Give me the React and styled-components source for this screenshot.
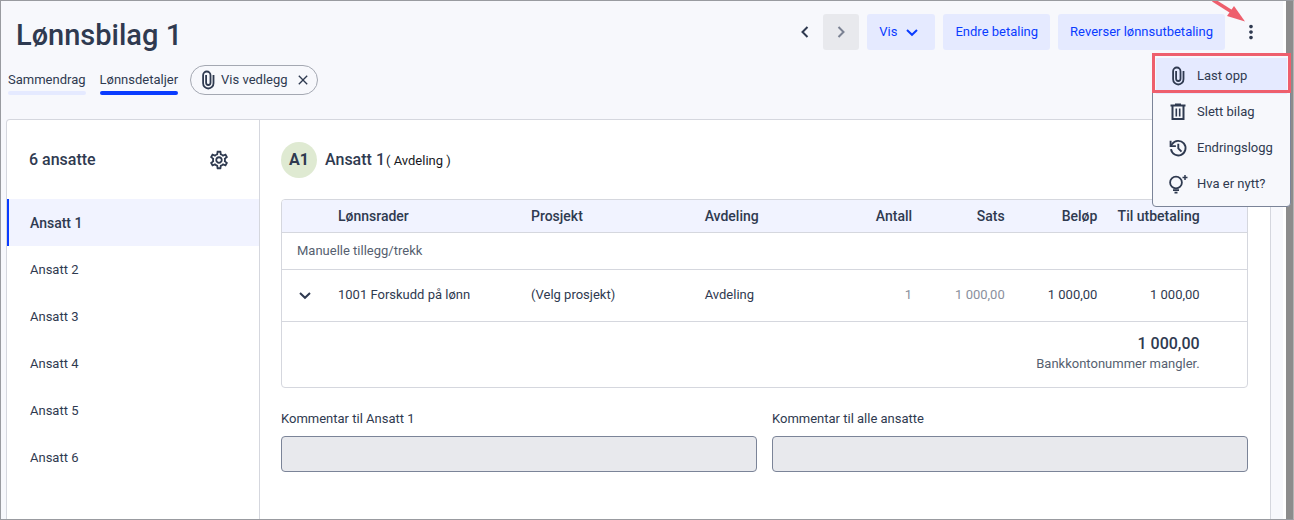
import React, { useState } from "react";
import styled, { createGlobalStyle, css } from "styled-components";
import { MdClose, MdMoreVert, MdOutlineSettings } from "react-icons/md";

const GlobalStyle = createGlobalStyle`
  *, *::before, *::after {
    box-sizing: border-box;
  }

  body {
    margin: 0;
    color: #2f3a50;
    background: #8c8c8c;
    font-family: Roboto, "Liberation Sans", sans-serif;
    font-size: 13px;
    line-height: 20px;
  }

  button, input {
    font: inherit;
    color: inherit;
  }

  button {
    border: 0;
    padding: 0;
    background: none;
    cursor: pointer;
  }

  svg {
    flex-shrink: 0;
  }
`;

const Window = styled.div`
  min-height: 100vh;
  display: flex;
  flex-direction: column;
  border: 1px solid #999ba0;
  border-right-color: #b4b4b4;
  background: #8c8c8c;
  padding-right: 7px;
`;

const Page = styled.div`
  flex: 1;
  display: flex;
  flex-direction: column;
  background: #f7f8fc;
  border-right: 3px solid #fff;
`;

const Header = styled.header`
  display: flex;
  justify-content: space-between;
  align-items: flex-start;
  padding: 13px 14px 0 15px;
`;

const Title = styled.h1`
  margin: 0;
  font-size: 29px;
  line-height: 42px;
  font-weight: 500;
`;

const Actions = styled.div`
  display: flex;
  gap: 8px;
`;

const IconButton = styled.button`
  width: ${({ $narrow }) => ($narrow ? "20px" : "36px")};
  height: 36px;
  display: flex;
  align-items: center;
  justify-content: center;
  border-radius: 3px;
  font-size: 22px;

  &:disabled {
    background: #e8e9ed;
    color: #7b8293;
    cursor: default;
  }
`;

const ActionButton = styled.button`
  height: 36px;
  display: flex;
  align-items: center;
  gap: 4px;
  padding: 0 12px;
  border-radius: 3px;
  background: #e5eaff;
  color: #0a3cff;
`;

const MenuWrapper = styled.div`
  position: relative;
`;

const Menu = styled.ul`
  position: absolute;
  top: 39px;
  right: -22px;
  z-index: 10;
  width: 139px;
  margin: 0;
  padding: 4px 0;
  list-style: none;
  background: #f7f8fc;
  border: 1px solid #7b8498;
  border-radius: 4px;

  /* marker frame round the first item */
  &::before {
    content: "";
    position: absolute;
    top: -1px;
    left: -1px;
    right: -1px;
    height: 40px;
    border: 3px solid #ee5f6d;
    pointer-events: none;
  }
`;

const MenuItem = styled.button`
  width: 100%;
  height: 36px;
  display: flex;
  align-items: center;
  gap: 9px;
  padding: 0 15px;
  white-space: nowrap;

  ${({ $active }) => $active && css`
    background: #e5eaff;
    border-left: 3px solid #f7f8fc;
    border-right: 3px solid #f7f8fc;
    border-radius: 3px;
    padding: 0 12px;
  `}
`;

const Arrow = styled.svg`
  position: absolute;
  top: -13px;
  right: 22px;
  overflow: hidden;
  pointer-events: none;
`;

const Tabs = styled.nav`
  display: flex;
  align-items: center;
  gap: 14px;
  padding: 9px 7px 0;
`;

const Tab = styled.a`
  padding-top: 5px;
  color: inherit;
  text-decoration: none;

  &::after {
    content: "";
    display: block;
    height: 4px;
    margin-top: 1px;
    border-radius: 2px;
    background: ${({ $active }) => ($active ? "#0a3cff" : "#e5eaff")};
  }
`;

const Chip = styled.div`
  height: 30px;
  display: flex;
  align-items: center;
  gap: 3px;
  margin-left: -2px;
  padding: 0 6px 1px 7px;
  border: 1px solid #a4a8b2;
  border-radius: 15px;

  button {
    display: flex;
    margin-left: 4px;
    font-size: 16px;
  }
`;

const Panel = styled.main`
  flex: 1;
  display: flex;
  margin: 24px 12px 0 5px;
  border: 1px solid #d5d7de;
  border-bottom: 0;
  border-radius: 4px 4px 0 0;
  background: #fff;
`;

const Sidebar = styled.aside`
  width: 253px;
  flex-shrink: 0;
  border-right: 1px solid #d5d7de;
`;

const SidebarHead = styled.div`
  height: 79px;
  display: flex;
  align-items: center;
  justify-content: space-between;
  padding: 0 22px;
`;

const SidebarTitle = styled.h2`
  margin: 0;
  font-size: 16px;
  font-weight: 500;
`;

const Employee = styled.button`
  width: 100%;
  height: 47px;
  display: block;
  padding: 0 21px;
  text-align: left;
  border-left: 2px solid transparent;

  ${({ $active }) => $active && css`
    font-size: 14px;
    font-weight: 500;
    background: #f1f3ff;
    border-left-color: #0a3cff;
  `}
`;

const Details = styled.section`
  flex: 1;
  padding: 22px 22px 0 21px;
`;

const EmployeeHead = styled.div`
  display: flex;
  align-items: center;
  gap: 8px;
  margin-bottom: 21px;
`;

const Avatar = styled.span`
  width: 36px;
  height: 36px;
  border-radius: 50%;
  background: #dfead2;
  font-size: 16px;
  line-height: 36px;
  font-weight: 700;
  text-align: center;
`;

const EmployeeName = styled.h2`
  margin: 0;
  font-size: 16px;
  font-weight: 500;

  small {
    margin-left: 1px;
    font-size: 13px;
    font-weight: 400;
    color: #16181d;
  }
`;

const TableFrame = styled.div`
  border: 1px solid #d5d7de;
  border-radius: 4px;
  overflow: hidden;
`;

const Table = styled.table`
  width: 100%;
  table-layout: fixed;
  border-collapse: collapse;

  th {
    height: 32px;
    padding: 0;
    font-size: 14px;
    font-weight: 500;
    text-align: left;
    background: #f1f3ff;
  }

  td {
    height: 52px;
    padding: 0;
  }

  tbody tr {
    border-top: 1px solid #d5d7de;
  }

  th:nth-child(n + 5), td:nth-child(n + 5) {
    text-align: right;
  }
`;

const GroupCell = styled.td`
  && {
    height: 37px;
    padding-left: 15px;
    color: #565f70;
  }
`;

const TotalCell = styled.td`
  && {
    height: 66px;
    text-align: right;
    color: #565f70;
  }

  strong {
    display: block;
    font-size: 16px;
    font-weight: 500;
    color: #2f3a50;
  }
`;

const Muted = styled.span`
  color: #8a909d;
`;

const ExpandButton = styled.button`
  display: flex;
  padding-left: 12px;
`;

const Comments = styled.div`
  display: grid;
  grid-template-columns: 1fr 1fr;
  gap: 15px;
  padding: 21px 0;
`;

const Field = styled.label`
  display: flex;
  flex-direction: column;
  gap: 7px;

  input {
    height: 36px;
    padding: 0 10px;
    border: 1px solid #7b8498;
    border-radius: 4px;
    background: #e8e9ed;
  }
`;

const chevrons = {
  left: "M13.5 6L8.5 11l5 5",
  right: "M8.5 6l5 5l-5 5",
  down: "M6 9l5 4.8L16 9",
};

const Chevron = ({ dir }) => (
  <svg width="22" height="22" viewBox="0 0 22 22" fill="none" stroke="currentColor" strokeWidth="2">
    <path d={chevrons[dir]} />
  </svg>
);

const AttachIcon = () => (
  <svg width="20" height="20" viewBox="0 0 20 20" fill="none" stroke="currentColor" strokeWidth="1.8">
    <path d="M15.5 5v8.3a5.2 5.2 0 0 1-10.4 0V5.2a3.7 3.7 0 0 1 7.4 0v7.6a2.2 2.2 0 0 1-4.4 0V5" />
  </svg>
);

const TrashIcon = () => (
  <svg width="20" height="20" viewBox="0 0 20 20" fill="none" stroke="currentColor" strokeWidth="2">
    <path d="M2.5 3.5h15M7 2.5h6M4.5 4v13h11V4" />
    <path d="M8.3 6.5v8M11.7 6.5v8" strokeWidth="1.6" />
  </svg>
);

const HistoryIcon = () => (
  <svg width="20" height="20" viewBox="0 0 20 20" fill="none" stroke="currentColor" strokeWidth="1.9">
    <path d="M3 11.2A7.3 7.3 0 1 0 4.2 6L2.8 7.8" />
    <path d="M2.6 2.8v5.3h5.3" />
    <path d="M10.3 5.8v4.6l3.2 3.2" />
  </svg>
);

const BulbIcon = () => (
  <svg width="20" height="20" viewBox="0 0 20 20" fill="none" stroke="currentColor" strokeWidth="1.8">
    <circle cx="8" cy="8.5" r="5.9" />
    <path d="M5 16.2h6M6.5 18.7h3" />
    <path d="M17 1v5M14.5 3.5h5" strokeWidth="1.5" />
  </svg>
);

const employees = [1, 2, 3, 4, 5, 6];

const menuItems = [
  { text: "Last opp", icon: <AttachIcon /> },
  { text: "Slett bilag", icon: <TrashIcon /> },
  { text: "Endringslogg", icon: <HistoryIcon /> },
  { text: "Hva er nytt?", icon: <BulbIcon /> },
];

function App() {
  const [selected, setSelected] = useState(1);
  const [menuOpen, setMenuOpen] = useState(true);

  return (
    <Window>
      <GlobalStyle />
      <Page>
        <Header>
          <Title>Lønnsbilag 1</Title>
          <Actions>
            <IconButton aria-label="Forrige" $narrow><Chevron dir="left" /></IconButton>
            <IconButton aria-label="Neste" disabled><Chevron dir="right" /></IconButton>
            <ActionButton>Vis <Chevron dir="down" /></ActionButton>
            <ActionButton>Endre betaling</ActionButton>
            <ActionButton>Reverser lønnsutbetaling</ActionButton>
            <MenuWrapper>
              <IconButton aria-label="Flere valg" onClick={() => setMenuOpen(!menuOpen)}>
                <MdMoreVert />
              </IconButton>
              <Arrow width="36" height="22" viewBox="0 0 36 22">
                <path d="M2 -1L21 11" stroke="#ee5f6d" strokeWidth="3.5" />
                <path d="M34 20.5L23 5L16 15Z" fill="#ee5f6d" />
              </Arrow>
              {menuOpen && (
                <Menu>
                  {menuItems.map((item, i) => (
                    <li key={item.text}>
                      <MenuItem $active={i === 0}>{item.icon} {item.text}</MenuItem>
                    </li>
                  ))}
                </Menu>
              )}
            </MenuWrapper>
          </Actions>
        </Header>

        <Tabs>
          <Tab href="#sammendrag">Sammendrag</Tab>
          <Tab href="#detaljer" $active>Lønnsdetaljer</Tab>
          <Chip>
            <AttachIcon /> Vis vedlegg
            <button aria-label="Lukk"><MdClose /></button>
          </Chip>
        </Tabs>

        <Panel>
          <Sidebar>
            <SidebarHead>
              <SidebarTitle>6 ansatte</SidebarTitle>
              <IconButton aria-label="Innstillinger"><MdOutlineSettings /></IconButton>
            </SidebarHead>
            {employees.map((n) => (
              <Employee key={n} $active={n === selected} onClick={() => setSelected(n)}>
                Ansatt {n}
              </Employee>
            ))}
          </Sidebar>

          <Details>
            <EmployeeHead>
              <Avatar>A{selected}</Avatar>
              <EmployeeName>Ansatt {selected}<small>( Avdeling )</small></EmployeeName>
            </EmployeeHead>

            <TableFrame>
              <Table>
                <colgroup>
                  <col style={{ width: "5.8%" }} />
                  <col style={{ width: "20%" }} />
                  <col style={{ width: "18%" }} />
                  <col style={{ width: "13%" }} />
                  <col style={{ width: "8.5%" }} />
                  <col style={{ width: "9.6%" }} />
                  <col style={{ width: "9.6%" }} />
                  <col style={{ width: "10.6%" }} />
                  <col />
                </colgroup>
                <thead>
                  <tr>
                    <th></th>
                    <th>Lønnsrader</th>
                    <th>Prosjekt</th>
                    <th>Avdeling</th>
                    <th>Antall</th>
                    <th>Sats</th>
                    <th>Beløp</th>
                    <th>Til utbetaling</th>
                    <th></th>
                  </tr>
                </thead>
                <tbody>
                  <tr><GroupCell colSpan={9}>Manuelle tillegg/trekk</GroupCell></tr>
                  <tr>
                    <td>
                      <ExpandButton aria-label="Vis mer"><Chevron dir="down" /></ExpandButton>
                    </td>
                    <td>1001 Forskudd på lønn</td>
                    <td>(Velg prosjekt)</td>
                    <td>Avdeling</td>
                    <td><Muted>1</Muted></td>
                    <td><Muted>1 000,00</Muted></td>
                    <td>1 000,00</td>
                    <td>1 000,00</td>
                    <td></td>
                  </tr>
                  <tr>
                    <TotalCell colSpan={8}>
                      <strong>1 000,00</strong>
                      Bankkontonummer mangler.
                    </TotalCell>
                    <td></td>
                  </tr>
                </tbody>
              </Table>
            </TableFrame>

            <Comments>
              <Field>Kommentar til Ansatt {selected}<input type="text" /></Field>
              <Field>Kommentar til alle ansatte<input type="text" /></Field>
            </Comments>
          </Details>
        </Panel>
      </Page>
    </Window>
  );
}

export default App;
